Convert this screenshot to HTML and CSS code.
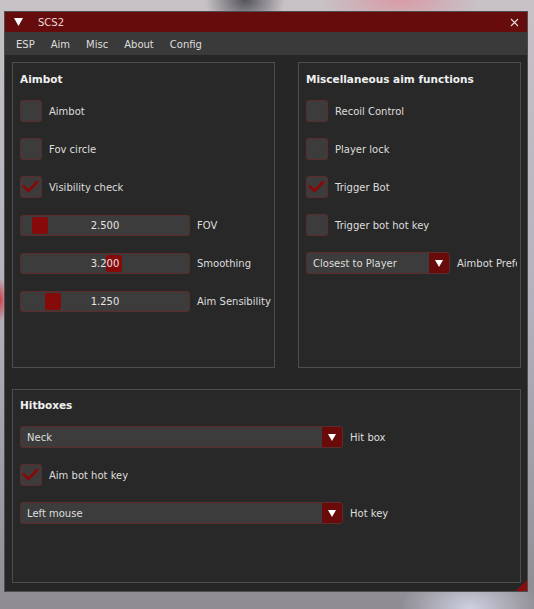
FILE: index.html
```html
<!DOCTYPE html>
<html lang="en">
<head>
  <meta charset="UTF-8">
  <meta name="viewport" content="width=device-width, initial-scale=1.0" />
  <title>SCS2</title>
  <link rel="stylesheet" href="styles.css">
</head>
<body>

  <div class="janela">
    <div class="barra-titulo">
      <svg class="seta-titulo" width="9" height="8" viewBox="0 0 9 8"><path d="M0 0 H9 L4.5 8 Z" fill="#fff"/></svg>
      <span class="titulo">SCS2</span>
      <svg class="fechar" width="9" height="9" viewBox="0 0 9 9"><path d="M1 1 L8 8 M8 1 L1 8" stroke="#e6dede" stroke-width="1.1"/></svg>
    </div>

    <nav class="menu">
      <a href="#">ESP</a>
      <a href="#">Aim</a>
      <a href="#">Misc</a>
      <a href="#">About</a>
      <a href="#">Config</a>
    </nav>

    <div class="conteudo">
      <div class="colunas">
        <section class="painel">
          <h2>Aimbot</h2>
          <div class="itens">
            <label class="linha"><span class="caixa"></span>Aimbot</label>
            <label class="linha"><span class="caixa"></span>Fov circle</label>
            <label class="linha"><span class="caixa marcada"><svg width="22" height="22" viewBox="0 0 22 22"><path d="M4 10.5 L8.5 15 L17 6" /></svg></span>Visibility check</label>
            <div class="linha">
              <div class="slider"><span class="pegador" style="left: 11px"></span><span class="valor">2.500</span></div>
              FOV
            </div>
            <div class="linha">
              <div class="slider"><span class="pegador" style="left: 85px"></span><span class="valor">3.200</span></div>
              Smoothing
            </div>
            <div class="linha">
              <div class="slider"><span class="pegador" style="left: 24px"></span><span class="valor">1.250</span></div>
              Aim Sensibility
            </div>
          </div>
        </section>

        <section class="painel">
          <h2>Miscellaneous aim functions</h2>
          <div class="itens">
            <label class="linha"><span class="caixa"></span>Recoil Control</label>
            <label class="linha"><span class="caixa"></span>Player lock</label>
            <label class="linha"><span class="caixa marcada"><svg width="22" height="22" viewBox="0 0 22 22"><path d="M4 10.5 L8.5 15 L17 6" /></svg></span>Trigger Bot</label>
            <label class="linha"><span class="caixa"></span>Trigger bot hot key</label>
            <div class="linha">
              <div class="combo combo-curto"><span>Closest to Player</span><span class="combo-seta"></span></div>
              Aimbot Preference
            </div>
          </div>
        </section>
      </div>

      <section class="painel painel-hitboxes">
        <h2>Hitboxes</h2>
        <div class="itens">
          <div class="linha">
            <div class="combo combo-longo"><span>Neck</span><span class="combo-seta"></span></div>
            Hit box
          </div>
          <label class="linha"><span class="caixa marcada"><svg width="22" height="22" viewBox="0 0 22 22"><path d="M4 10.5 L8.5 15 L17 6" /></svg></span>Aim bot hot key</label>
          <div class="linha">
            <div class="combo combo-longo"><span>Left mouse</span><span class="combo-seta"></span></div>
            Hot key
          </div>
        </div>
      </section>
    </div>

    <span class="redimensionar"></span>
  </div>

</body>
</html>
```

FILE: styles.css
```css
:root {
  --cor-janela: #262626;
  --cor-menu: #3a3a3a;
  --cor-titulo: #660c0c;
  --cor-campo: #3c3c3c;
  --cor-borda-campo: #5e2b2b;
  --cor-vermelho: #860a0a;
  --cor-texto: #dedede;
  --cor-borda: #4e4e4e;

  --fonte: 'DejaVu Sans', Verdana, sans-serif;
}

* {
  margin: 0;
  padding: 0;
  box-sizing: border-box;
}

body {
  font-family: var(--fonte);
  font-size: 10px;
  color: var(--cor-texto);
  height: 609px;
  overflow: hidden;
  padding: 11px 0 0 4px;
  background:
    radial-gradient(ellipse 40px 30px at 245px 0, #55545b 0%, rgba(85,84,91,0) 100%),
    radial-gradient(ellipse 80px 28px at 400px 0, #d99aa5 0%, rgba(217,154,165,0) 100%),
    radial-gradient(ellipse 70px 40px at 470px 609px, #cfd1e2 0%, rgba(207,209,226,0) 100%),
    radial-gradient(ellipse 8px 22px at 0 300px, #cc4049 0%, rgba(204,64,73,0) 100%),
    linear-gradient(180deg, #c7c2c6 0%, #b4b1be 50%, #8e8c92 100%);
}

.janela {
  position: relative;
  width: 524px;
  height: 581px;
  background-color: var(--cor-janela);
  border: 1px solid var(--cor-borda);
  display: flex;
  flex-direction: column;
}

.barra-titulo {
  height: 20px;
  background-color: var(--cor-titulo);
  display: flex;
  align-items: center;
  padding: 0 8px 0 9px;
}

.seta-titulo {
  margin-right: 15px;
}

.titulo {
  color: #eadada;
  flex: 1;
}

.menu {
  height: 23px;
  background-color: var(--cor-menu);
  display: flex;
  align-items: center;
  padding: 1px 0 0 11px;
  gap: 16px;
}

.menu a {
  color: var(--cor-texto);
  text-decoration: none;
}

.conteudo {
  padding: 7px 6px 8px 7px;
  display: flex;
  flex-direction: column;
  gap: 21px;
}

.colunas {
  display: grid;
  grid-template-columns: 263px 223px;
  column-gap: 23px;
}

.painel {
  height: 306px;
  border: 1px solid var(--cor-borda);
  background-color: #282828;
  padding: 7px 3px 7px 7px;
}

.painel-hitboxes {
  height: 194px;
  padding-top: 6px;
}

.painel h2 {
  font-size: 10.5px;
  font-weight: bold;
  line-height: 18px;
  color: #f0f0f0;
}

.itens {
  margin-top: 12px;
  display: flex;
  flex-direction: column;
  gap: 16px;
  overflow: hidden;
}

.linha {
  height: 22px;
  display: flex;
  align-items: center;
  gap: 7px;
  white-space: nowrap;
}

.caixa {
  width: 22px;
  height: 22px;
  flex-shrink: 0;
  background-color: var(--cor-campo);
  border: 1px solid var(--cor-borda-campo);
  border-radius: 3px;
  position: relative;
}

.caixa svg {
  position: absolute;
  top: -1px;
  left: -1px;
}

.caixa path {
  fill: none;
  stroke: var(--cor-vermelho);
  stroke-width: 3;
  stroke-linecap: round;
  stroke-linejoin: round;
}

.slider {
  position: relative;
  width: 170px;
  height: 21px;
  flex-shrink: 0;
  background-color: var(--cor-campo);
  border: 1px solid var(--cor-borda-campo);
  border-radius: 3px;
  display: flex;
  align-items: center;
  justify-content: center;
}

.pegador {
  position: absolute;
  top: 1px;
  bottom: 1px;
  width: 16px;
  background-color: var(--cor-vermelho);
  border-radius: 2px;
}

.valor {
  position: relative;
  color: #e4e4e4;
}

.combo {
  height: 22px;
  flex-shrink: 0;
  background-color: var(--cor-campo);
  border: 1px solid var(--cor-borda-campo);
  border-radius: 3px;
  display: flex;
  align-items: center;
  justify-content: space-between;
  padding-left: 6px;
  overflow: hidden;
}

.combo-curto {
  width: 144px;
}

.combo-longo {
  width: 323px;
}

.combo-seta {
  width: 20px;
  height: 100%;
  background-color: #6a0b0b;
  position: relative;
}

.combo-seta::after {
  content: "";
  position: absolute;
  left: 6px;
  top: 7px;
  border-left: 4px solid transparent;
  border-right: 4px solid transparent;
  border-top: 7px solid #fff;
}

.redimensionar {
  position: absolute;
  right: 0;
  bottom: 0;
  width: 0;
  height: 0;
  border-left: 11px solid transparent;
  border-bottom: 11px solid #8b0c0c;
}
```
